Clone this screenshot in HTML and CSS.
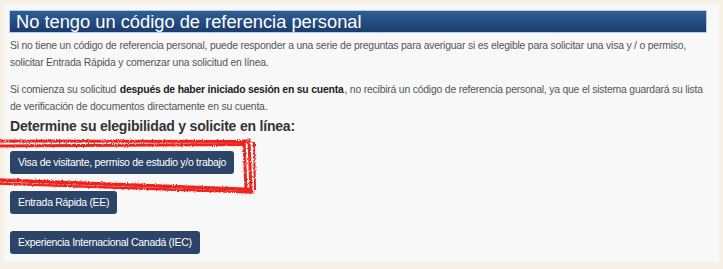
FILE: index.html
```html
<!DOCTYPE html>
<html lang="es">
  <head>
    <meta name="viewport" content="width=device-width, initial-scale=1" />
    <title>Código de referencia personal</title>
    <link rel="stylesheet" href="styles.css">
  </head>
  <body>

    <div class="panel">
      <h2 class="panel-title">No tengo un código de referencia personal</h2>

      <p class="panel-text">Si no tiene un código de referencia personal, puede responder a una serie de preguntas para averiguar si es elegible para solicitar una visa y / o permiso, solicitar Entrada Rápida y comenzar una solicitud en línea.</p>

      <p class="panel-text">Si comienza su solicitud <strong>después de haber iniciado sesión en su cuenta</strong>, no recibirá un código de referencia personal, ya que el sistema guardará su lista de verificación de documentos directamente en su cuenta.</p>

      <h3 class="section-title">Determine su elegibilidad y solicite en línea:</h3>

      <div class="btn-list">
        <div class="btn-row">
          <a class="btn" href="#">Visa de visitante, permiso de estudio y/o trabajo</a>
          <!-- red marker drawn over the first button -->
          <svg class="scribble" width="262" height="60" viewBox="0 0 262 60">
            <defs>
              <filter id="rough" x="-5%" y="-20%" width="110%" height="140%">
                <feTurbulence type="fractalNoise" baseFrequency="0.9" numOctaves="2" seed="3"/>
                <feDisplacementMap in="SourceGraphic" scale="3"/>
              </filter>
            </defs>
            <g fill="none" stroke="#f0221d" stroke-linecap="square" filter="url(#rough)">
              <path d="M-2 4 L246 4.5" stroke-width="3"/>
              <path d="M-2 9 L243 7.5" stroke-width="3"/>
              <path d="M244 4 L246 54" stroke-width="3"/>
              <path d="M249 3 L251 55" stroke-width="3"/>
              <path d="M254 6 L255 52" stroke-width="2"/>
              <path d="M-2 43 L250 52.5" stroke-width="3.5"/>
              <path d="M-2 46.5 L253 55.5" stroke-width="2.5"/>
            </g>
          </svg>
        </div>
        <div class="btn-row">
          <a class="btn" href="#">Entrada Rápida (EE)</a>
        </div>
        <div class="btn-row">
          <a class="btn" href="#">Experiencia Internacional Canadá (IEC)</a>
        </div>
      </div>
    </div>

  </body>
</html>
```

FILE: styles.css
```css
body {
    margin: 0;
    padding: 4px 4px 7px 4px;
    background-color: #f6f0e5;
    font-family: "Liberation Sans", Arial, sans-serif;
}
.panel {
    background-color: #f8f8f8;
    padding: 7px 13px 8px 6px;
    height: 243px;
}
.panel-title {
    margin: 0;
    padding: 0 6px;
    height: 21px;
    line-height: 21px;
    font-size: 18.3px;
    font-weight: normal;
    color: #fff;
    background: linear-gradient(#2e5f96, #1b3b6d);
    box-shadow: 0 0 0 1px #b7cde3;
}
.panel-text {
    margin: 5px 0 0 0;
    font-size: 10.4px;
    letter-spacing: -0.2px;
    line-height: 17px;
    color: #555;
}
.panel-text + .panel-text {
    margin-top: 10px;
}
.panel-text strong {
    color: #222;
    padding: 0 1px;
}
.section-title {
    margin: 2px 0 0 0;
    font-size: 14px;
    letter-spacing: -0.2px;
    line-height: 18px;
    font-weight: bold;
    color: #333;
}
.btn-list {
    margin-top: 16px;
}
.btn-row {
    position: relative;
    margin-bottom: 17px;
}
.btn {
    display: inline-block;
    padding: 0 8px;
    height: 23px;
    line-height: 23px;
    font-size: 10.5px;
    letter-spacing: -0.3px;
    color: #fff;
    text-decoration: none;
    background-color: #2c4467;
    border-radius: 3px;
}
.scribble {
    position: absolute;
    left: -10px;
    top: -14px;
}
```
